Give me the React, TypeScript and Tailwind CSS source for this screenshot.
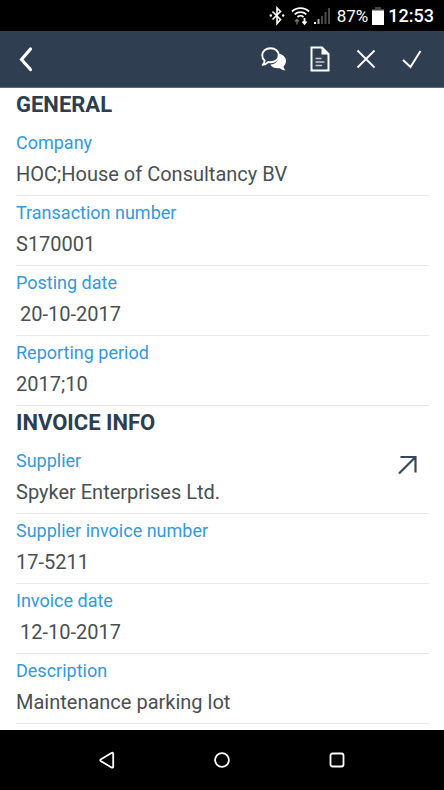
import type { ReactNode } from "react";

type Field = {
  label: string;
  value: string;
  indent?: boolean;
  link?: boolean;
};

const general: Field[] = [
  { label: "Company", value: "HOC;House of Consultancy BV" },
  { label: "Transaction number", value: "S170001" },
  { label: "Posting date", value: "20-10-2017", indent: true },
  { label: "Reporting period", value: "2017;10" },
];

const invoiceInfo: Field[] = [
  { label: "Supplier", value: "Spyker Enterprises Ltd.", link: true },
  { label: "Supplier invoice number", value: "17-5211" },
  { label: "Invoice date", value: "12-10-2017", indent: true },
  { label: "Description", value: "Maintenance parking lot" },
];

const StatusBar = () => (
  <div className="flex h-[31px] items-center justify-end bg-black pr-2.5 text-white">
    <svg className="mr-1.5 h-5 w-4" viewBox="0 0 16 20" fill="none" stroke="currentColor" strokeWidth="1.6">
      <path d="M3.5 5.500l8 8L8 17.500V2l3.500 3.500-8 8" />
      <circle cx="1.800" cy="9.500" r="1.200" fill="currentColor" stroke="none" />
      <circle cx="14.200" cy="9.500" r="1.200" fill="currentColor" stroke="none" />
    </svg>
    <svg className="mr-1 h-5 w-[19px]" viewBox="0 0 19 20" fill="none" stroke="currentColor" strokeWidth="1.8">
      <path d="M1 5.500c4.500-4.500 12.500-4.500 17 0M3.700 8.300c3.200-3 8.400-3 11.600 0M6.500 11c1.700-1.600 4.300-1.600 6 0" />
      <path d="M6 18.500v-4M4 15.500l2-2 2 2" stroke="#777" strokeWidth="1.300" />
      <path d="M13.500 12v5M11.500 15.500l2 2.300 2-2.300" />
    </svg>
    <svg className="mr-1.5 h-[18px] w-[17px]" viewBox="0 0 17 18" fill="#4a4a4a">
      <path fill="#fff" d="M0 15h2v2H0z" />
      <path fill="#aaa" d="M3.500 12h2v5h-2z" />
      <path d="M7 9h2v8H7zM10.500 5h2v12h-2zM14 1h2v16h-2z" />
    </svg>
    <span className="text-[17px] leading-5">87%</span>
    <svg className="mx-1 h-[18px] w-3" viewBox="0 0 12 18">
      <path fill="#444" d="M3 0h6v2h3v2H0V2h3z" />
      <path fill="#fff" d="M0 3.500h12V18H0z" />
    </svg>
    <span className="text-[18px] leading-5 font-medium">12:53</span>
  </div>
);

const IconButton = ({ label, children }: { label: string; children: ReactNode }) => (
  <button type="button" aria-label={label} className="flex h-10 w-7 items-center justify-center">
    {children}
  </button>
);

const Toolbar = () => (
  <header className="flex h-[57px] items-center justify-between border-b border-[#5b6b7c] bg-[#2f3e50] px-3 text-white">
    <IconButton label="Back">
      <svg className="h-7 w-4" viewBox="0 0 16 28" fill="none" stroke="currentColor" strokeWidth="3.2" strokeLinecap="round">
        <path d="M12.500 4L3.500 14.500l9 10" />
      </svg>
    </IconButton>
    <div className="flex items-center gap-[18px] pr-1.5">
      <IconButton label="Comments">
        <svg className="h-6 w-[26px]" viewBox="0 0 26 24">
          <path
            fill="#fff"
            d="M17.500 6.500c4.500 1 7.500 3.500 7.500 7.500 0 2.200-1 4-2.500 5.200.2 1.900 1 3 2 4-2.300.2-4.300-.7-5.600-2-4.200.5-7.900-.8-9.600-3.500 5.500-.6 9.500-4.500 8.200-11.200z"
          />
          <path
            fill="#2f3e50"
            stroke="#fff"
            strokeWidth="1.900"
            strokeLinejoin="round"
            d="M9.500 1.200c4.800 0 8.300 2.900 8.300 7s-3.500 7.100-8.300 7.100c-.8 0-1.600-.1-2.400-.3-1.400 1.700-3.200 2.800-5.400 2.900 1.200-1.200 1.900-2.600 1.900-4.400C2 12.200 1.200 10.400 1.200 8.200c0-4.100 3.500-7 8.300-7z"
          />
        </svg>
      </IconButton>
      <IconButton label="Document">
        <svg className="h-[26px] w-5" viewBox="0 0 20 26">
          <path fill="none" stroke="#fff" strokeWidth="2" d="M1.500 1.500h10.500l6.500 6.500v16.500h-17z" />
          <path fill="#fff" d="M11.500 1l7.500 7.500h-7.500z" />
          <path stroke="#c5ccd3" strokeWidth="1.500" d="M5.500 12.500h6M5.500 16h9M5.500 19.500h6.500" />
        </svg>
      </IconButton>
      <IconButton label="Reject">
        <svg className="h-5 w-5" viewBox="0 0 20 20" stroke="currentColor" strokeWidth="1.800">
          <path d="M1.500 1.500l17 17M18.500 1.500l-17 17" />
        </svg>
      </IconButton>
      <IconButton label="Approve">
        <svg className="h-5 w-5" viewBox="0 0 20 20" fill="none" stroke="currentColor" strokeWidth="2">
          <path d="M1 11l7.500 7L18.500 2" />
        </svg>
      </IconButton>
    </div>
  </header>
);

const Section = ({ title, fields }: { title: string; fields: Field[] }) => (
  <section>
    <h2 className="h-[38px] pt-[3px] text-[22px] leading-7 font-bold text-[#2c3e50]">{title}</h2>
    <dl>
      {fields.map((field) => (
        <div key={field.label} className="flex h-[70px] justify-between border-b border-[#e8e8e8]">
          <div className={field.indent ? "[&>dd]:pl-1" : ""}>
            <dt className="pt-[3px] text-[18px] leading-7 text-[#3498db]">{field.label}</dt>
            <dd className="pt-[3px] text-[20px] leading-7 text-[#4a4f52]">{field.value}</dd>
          </div>
          {field.link && (
            <a href="#" aria-label={`Open ${field.label}`} className="mt-[11px] mr-[11px] h-5 w-5 text-[#34495e]">
              <svg className="h-5 w-5" viewBox="0 0 20 20" fill="none" stroke="currentColor" strokeWidth="2.200">
                <path d="M2.500 2h15v15.500M17.500 2L1 18.500" />
              </svg>
            </a>
          )}
        </div>
      ))}
    </dl>
  </section>
);

const NavBar = () => (
  <nav className="flex h-[60px] items-center justify-center gap-[91px] bg-black text-white">
    <button type="button" aria-label="Back" className="flex h-10 w-6 items-center justify-center">
      <svg className="h-[18px] w-[18px]" viewBox="0 0 18 18" fill="none" stroke="currentColor" strokeWidth="1.800" strokeLinejoin="round">
        <path d="M13.500 2q1.700-.8 1.700 1v12.400q0 1.800-1.700 1L3 10.200q-1.500-1 0-2z" />
      </svg>
    </button>
    <button type="button" aria-label="Home" className="flex h-10 w-6 items-center justify-center">
      <svg className="h-4 w-4" viewBox="0 0 16 16" fill="none" stroke="currentColor" strokeWidth="1.800">
        <circle cx="8" cy="8" r="6.900" />
      </svg>
    </button>
    <button type="button" aria-label="Recent apps" className="flex h-10 w-6 items-center justify-center">
      <svg className="h-4 w-4" viewBox="0 0 16 16" fill="none" stroke="currentColor" strokeWidth="1.800">
        <rect x="1.500" y="1.500" width="13" height="13" rx="2" />
      </svg>
    </button>
  </nav>
);

export default function App() {
  return (
    <div className="flex min-h-screen flex-col bg-white font-[Roboto,sans-serif]">
      <StatusBar />
      <Toolbar />
      <main className="flex-1 pr-[15px] pb-1.5 pl-4">
        <Section title="GENERAL" fields={general} />
        <Section title="INVOICE INFO" fields={invoiceInfo} />
      </main>
      <NavBar />
    </div>
  );
}
